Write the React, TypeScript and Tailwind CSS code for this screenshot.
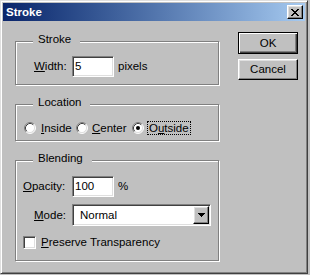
import React from "react";

const sunken =
  "border border-t-[#808080] border-l-[#808080] border-b-white border-r-white shadow-[inset_1px_1px_#404040,inset_-1px_-1px_#dfdfdf]";
const raised =
  "border border-t-white border-l-white border-b-[#000] border-r-[#000] shadow-[inset_-1px_-1px_#808080,inset_1px_1px_#dfdfdf]";

function Radio({ checked }: { checked?: boolean }) {
  return (
    <svg width="12" height="12" viewBox="0 0 12 12" className="shrink-0">
      <circle cx="6" cy="6" r="5" fill="#fff" />
      <path d="M2.11 9.89 A5.5 5.5 0 0 1 9.89 2.11" fill="none" stroke="#808080" strokeWidth="1" />
      <path d="M9.89 2.11 A5.5 5.5 0 0 1 2.11 9.89" fill="none" stroke="#fff" strokeWidth="1" />
      <path d="M2.82 9.18 A4.5 4.5 0 0 1 9.18 2.82" fill="none" stroke="#404040" strokeWidth="1" />
      <path d="M9.18 2.82 A4.5 4.5 0 0 1 2.82 9.18" fill="none" stroke="#dfdfdf" strokeWidth="1" />
      {checked && <circle cx="6" cy="6" r="2" fill="#000" />}
    </svg>
  );
}

function Group({
  label,
  h,
  children,
  className = "",
}: {
  label: string;
  h: string;
  children: React.ReactNode;
  className?: string;
}) {
  return (
    <div
      className={`relative w-[204px] border border-[#808080] shadow-[inset_1px_1px_#fff,1px_1px_#fff] ${h} ${className}`}
    >
      <div className="absolute left-[17px] -top-[9px] bg-[#c0c0c0] pl-[5px] pr-[9px] leading-[13px]">
        {label}
      </div>
      {children}
    </div>
  );
}

export default function App() {
  return (
    <div className="w-[310px] h-[275px] bg-[#c0c0c0] font-['Liberation_Sans',Arial,sans-serif] text-[11.5px] text-black leading-[13px]">
      <div className="w-[308px] h-[274px] border border-t-[#dfdfdf] border-l-[#dfdfdf] border-b-[#404040] border-r-[#404040] shadow-[inset_1px_1px_#fff,inset_-1px_-1px_#808080] p-[2px] flex flex-col">
        {/* Title bar */}
        <div className="h-[18px] w-full bg-linear-to-r from-[#0a246a] to-[#a6caf0] flex items-center pl-[3px] pr-[2px]">
          <span className="text-white font-bold text-[11.5px]">Stroke</span>
          <div className={`ml-auto w-[16px] h-[14px] bg-[#c0c0c0] ${raised} flex items-center justify-center`}>
            <svg width="8" height="7" viewBox="0 0 8 7" shapeRendering="crispEdges">
              <path
                fill="#000"
                d="M0 0h2v1H0zM6 0h2v1H6zM1 1h2v1H1zM5 1h2v1H5zM2 2h4v1H2zM3 3h2v1H3zM2 4h4v1H2zM1 5h2v1H1zM5 5h2v1H5zM0 6h2v1H0zM6 6h2v1H6z"
              />
            </svg>
          </div>
        </div>

        {/* Body */}
        <div className="flex flex-row items-start">
          <div className="ml-[12px] mt-[20px] flex flex-col">
            <Group label="Stroke" h="h-[44px]">
              <div className="flex items-center pt-[14px] pl-[18px]">
                <span className="w-[38px]">
                  <u>W</u>idth:
                </span>
                <div className={`w-[42px] h-[21px] bg-white ${sunken} flex items-center pl-[2px]`}>5</div>
                <span className="ml-[4px]">pixels</span>
              </div>
            </Group>

            <Group label="Location" h="h-[37px]" className="mt-[19px]">
              <div className="flex items-center pt-[16px] pl-[8px]">
                <div className="flex items-center w-[52px]">
                  <Radio />
                  <span className="ml-[5px]">
                    <u>I</u>nside
                  </span>
                </div>
                <div className="flex items-center w-[56px]">
                  <Radio />
                  <span className="ml-[4px]">
                    <u>C</u>enter
                  </span>
                </div>
                <div className="flex items-center">
                  <Radio checked />
                  <span className="ml-[3px] border border-dotted border-black px-[1px] leading-[12px]">
                    O<u>u</u>tside
                  </span>
                </div>
              </div>
            </Group>

            <Group label="Blending" h="h-[101px]" className="mt-[19px]">
              <div className="flex flex-col pt-[15px]">
                <div className="flex items-center pl-[7px]">
                  <span className="w-[49px]">
                    <u>O</u>pacity:
                  </span>
                  <div className={`w-[42px] h-[21px] bg-white ${sunken} flex items-center pl-[2px]`}>100</div>
                  <span className="ml-[4px]">%</span>
                </div>
                <div className="flex items-center pl-[18px] mt-[7px]">
                  <span className="w-[38px]">
                    <u>M</u>ode:
                  </span>
                  <div className={`w-[139px] h-[22px] bg-white ${sunken} flex items-center p-[1px]`}>
                    <span className="pl-[6px] flex-1">Normal</span>
                    <div className={`w-[16px] h-[18px] bg-[#c0c0c0] ${raised} flex items-center justify-center`}>
                      <svg width="7" height="4" viewBox="0 0 7 4" shapeRendering="crispEdges">
                        <path fill="#000" d="M0 0h7v1H0zM1 1h5v1H1zM2 2h3v1H2zM3 3h1v1H3z" />
                      </svg>
                    </div>
                  </div>
                </div>
                <div className="flex items-center pl-[7px] mt-[10px]">
                  <div className={`w-[13px] h-[13px] bg-white ${sunken}`} />
                  <span className="ml-[5px]">
                    <u>P</u>reserve Transparency
                  </span>
                </div>
              </div>
            </Group>
          </div>

          <div className="ml-[19px] mt-[11px] flex flex-col">
            <div className="w-[60px] h-[22px] bg-[#c0c0c0] border border-black shadow-[inset_1px_1px_#fff,inset_-1px_-1px_#404040,inset_-2px_-2px_#808080] flex items-center justify-center">
              OK
            </div>
            <div className={`mt-[5px] w-[60px] h-[21px] bg-[#c0c0c0] ${raised} flex items-center justify-center`}>
              Cancel
            </div>
          </div>
        </div>
      </div>
    </div>
  );
}
